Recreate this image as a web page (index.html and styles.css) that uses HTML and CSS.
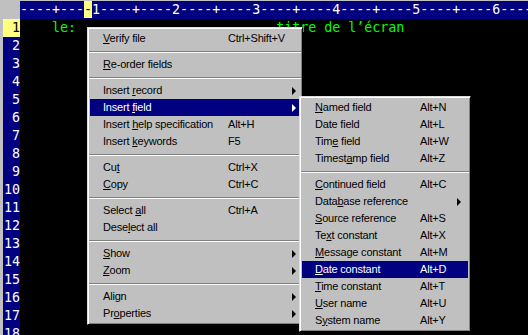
FILE: index.html
```
<!DOCTYPE html>
<html lang="fr">
<head>
    <meta charset="UTF-8">
    <title>Screen editor - context menu</title>
    <link rel="stylesheet" href="styles.css">
</head>
<body>

    <div class="screen">
        <!-- Ruler -->
        <div class="ruler-row">
            <div class="corner"></div>
            <div class="ruler">----+---<span class="cursor">-</span>1----+----2----+----3----+----4----+----5----+----6----+--</div>
        </div>

        <!-- Line numbers + editor -->
        <div class="body-row">
            <div class="gutter">
                <div class="num current">1</div>
                <div class="num">2</div>
                <div class="num">3</div>
                <div class="num">4</div>
                <div class="num">5</div>
                <div class="num">6</div>
                <div class="num">7</div>
                <div class="num">8</div>
                <div class="num">9</div>
                <div class="num">10</div>
                <div class="num">11</div>
                <div class="num">12</div>
                <div class="num">13</div>
                <div class="num">14</div>
                <div class="num">15</div>
                <div class="num">16</div>
                <div class="num">17</div>
                <div class="num">18</div>
            </div>
            <div class="editor">
                <div class="line">    le:                         titre de l’écran</div>
            </div>
        </div>

        <!-- Context menu -->
        <div class="menu main-menu">
            <div class="item"><span class="label"><u>V</u>erify file</span><span class="key">Ctrl+Shift+V</span></div>
            <div class="sep"></div>
            <div class="item"><span class="label"><u>R</u>e-order fields</span></div>
            <div class="sep"></div>
            <div class="item"><span class="label">Insert <u>r</u>ecord</span><span class="key"></span><span class="arrow"></span></div>
            <div class="item active"><span class="label">Insert <u>f</u>ield</span><span class="key"></span><span class="arrow"></span></div>
            <div class="item"><span class="label">Insert <u>h</u>elp specification</span><span class="key">Alt+H</span></div>
            <div class="item"><span class="label">Insert <u>k</u>eywords</span><span class="key">F5</span></div>
            <div class="sep"></div>
            <div class="item"><span class="label">Cu<u>t</u></span><span class="key">Ctrl+X</span></div>
            <div class="item"><span class="label"><u>C</u>opy</span><span class="key">Ctrl+C</span></div>
            <div class="sep"></div>
            <div class="item"><span class="label">Select <u>a</u>ll</span><span class="key">Ctrl+A</span></div>
            <div class="item"><span class="label">Dese<u>l</u>ect all</span></div>
            <div class="sep"></div>
            <div class="item"><span class="label"><u>S</u>how</span><span class="key"></span><span class="arrow"></span></div>
            <div class="item"><span class="label"><u>Z</u>oom</span><span class="key"></span><span class="arrow"></span></div>
            <div class="sep"></div>
            <div class="item"><span class="label">Ali<u>g</u>n</span><span class="key"></span><span class="arrow"></span></div>
            <div class="item"><span class="label">Pr<u>o</u>perties</span><span class="key"></span><span class="arrow"></span></div>
        </div>

        <!-- Insert field submenu -->
        <div class="menu sub-menu">
            <div class="item"><span class="label"><u>N</u>amed field</span><span class="key">Alt+N</span></div>
            <div class="item"><span class="label">Date field</span><span class="key">Alt+L</span></div>
            <div class="item"><span class="label">Tim<u>e</u> field</span><span class="key">Alt+W</span></div>
            <div class="item"><span class="label">Timest<u>a</u>mp field</span><span class="key">Alt+Z</span></div>
            <div class="sep"></div>
            <div class="item"><span class="label"><u>C</u>ontinued field</span><span class="key">Alt+C</span></div>
            <div class="item"><span class="label">Data<u>b</u>ase reference</span><span class="key"></span><span class="arrow"></span></div>
            <div class="item"><span class="label"><u>S</u>ource reference</span><span class="key">Alt+S</span></div>
            <div class="item"><span class="label">Te<u>x</u>t constant</span><span class="key">Alt+X</span></div>
            <div class="item"><span class="label"><u>M</u>essage constant</span><span class="key">Alt+M</span></div>
            <div class="item active"><span class="label"><u>D</u>ate constant</span><span class="key">Alt+D</span></div>
            <div class="item"><span class="label"><u>T</u>ime constant</span><span class="key">Alt+T</span></div>
            <div class="item"><span class="label"><u>U</u>ser name</span><span class="key">Alt+U</span></div>
            <div class="item"><span class="label">S<u>y</u>stem name</span><span class="key">Alt+Y</span></div>
        </div>
    </div>

</body>
</html>
```

FILE: styles.css
```
body {
    margin: 0;
    padding: 0;
    background-color: #000;
    overflow: hidden;
}
.screen {
    position: relative;
    width: 528px;
    height: 335px;
    background-color: #c0c0c0;
    padding-top: 1px;
    box-sizing: border-box;
    overflow: hidden;
    font-family: "DejaVu Sans Mono", "Liberation Mono", monospace;
    font-size: 13.3px;
}

/* Ruler */
.ruler-row {
    display: flex;
    height: 18px;
}
.corner {
    width: 20px;
    flex: none;
}
.ruler {
    flex: 1;
    background-color: #000080;
    color: #fff;
    line-height: 18px;
    white-space: pre;
    overflow: hidden;
}
.ruler .cursor {
    background-color: #ffff80;
    color: #000080;
    display: inline-block;
    height: 17px;
}

/* Line numbers and text */
.body-row {
    display: flex;
    height: 316px;
}
.gutter {
    width: 17px;
    margin-left: 3px;
    flex: none;
    background-color: #000080;
}
.num {
    height: 18px;
    line-height: 18px;
    text-align: right;
    color: #fff;
    white-space: nowrap;
}
.num.current {
    background-color: #ffff80;
    color: #000;
}
.editor {
    flex: 1;
    background-color: #000;
}
.line {
    height: 18px;
    line-height: 17px;
    color: #00ff00;
    white-space: pre;
}

/* Popup menus */
.menu {
    position: absolute;
    background-color: #c0c0c0;
    border: 1px solid;
    border-color: #dfdfdf #000 #000 #dfdfdf;
    box-shadow: inset 1px 1px #fff, inset -1px -1px #808080;
    padding: 2px;
    box-sizing: border-box;
    font-family: "Liberation Sans", Arial, sans-serif;
    font-size: 11px;
    letter-spacing: -0.2px;
    color: #000;
}
.main-menu {
    left: 87px;
    top: 27px;
    width: 216px;
}
.sub-menu {
    left: 299px;
    top: 96px;
    width: 172px;
}
.item {
    display: flex;
    align-items: center;
    height: 17px;
    padding-left: 13px;
    padding-bottom: 2px;
    box-sizing: border-box;
    white-space: nowrap;
}
.item.active {
    background-color: #000080;
    color: #fff;
}
.main-menu .label {
    width: 125px;
}
.sub-menu .label {
    width: 105px;
}
.key {
    flex: 1;
}
.arrow {
    width: 0;
    height: 0;
    border-top: 4px solid transparent;
    border-bottom: 4px solid transparent;
    border-left: 4px solid #000;
    margin-right: 4px;
    margin-top: 2px;
}
.sub-menu .arrow {
    margin-right: 7px;
}
.item.active .arrow {
    border-left-color: #fff;
}
.sep {
    height: 9px;
    margin: 0 -1px;
    background: linear-gradient(#c0c0c0 4px, #808080 4px, #808080 5px, #fff 5px, #fff 6px, #c0c0c0 6px);
}
```
